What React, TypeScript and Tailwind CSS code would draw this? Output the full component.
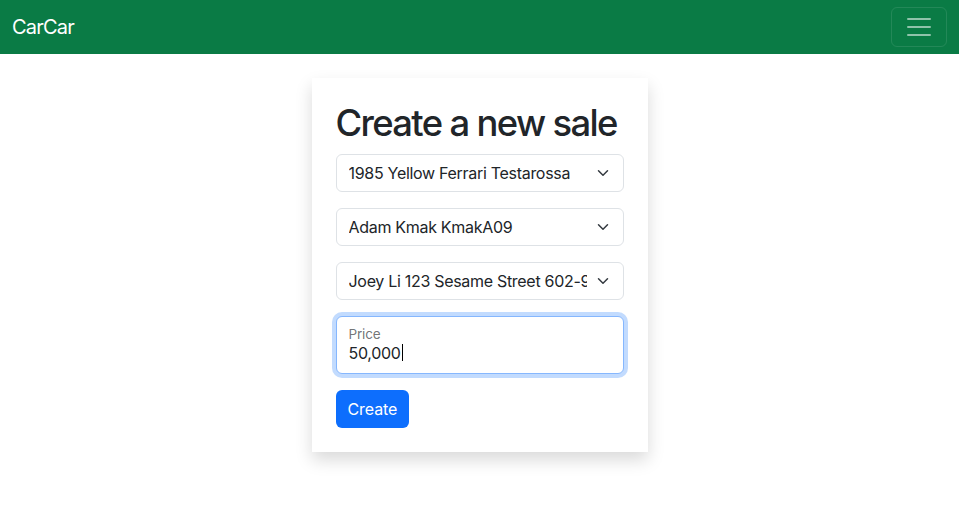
import React from 'react';

const font = { fontFamily: 'Inter, "Noto Sans", "Liberation Sans", sans-serif' };

function Chevron() {
  return (
    <svg
      className="pointer-events-none absolute right-[12px] top-1/2 -translate-y-1/2"
      width="16"
      height="12"
      viewBox="0 0 16 16"
      fill="none"
    >
      <path d="m2 5 6 6 6-6" stroke="#343a40" strokeWidth="2" strokeLinecap="round" strokeLinejoin="round" />
    </svg>
  );
}

function FakeSelect({ value }: { value: string }) {
  return (
    <div className="relative mb-4 h-[38px] rounded-[6px] border border-[#dee2e6] bg-white py-[6px] pl-[12px] pr-[36px]">
      <div className="overflow-hidden whitespace-nowrap text-[16px] leading-6 tracking-[-0.3px] text-[#212529]">
        {value}
      </div>
      <Chevron />
    </div>
  );
}

export default function App() {
  return (
    <div className="min-h-screen bg-white" style={font}>
      {/* navbar */}
      <nav className="flex h-[54px] items-center justify-between bg-[#0a7b45] px-3">
        <a className="text-[20px] leading-[30px] tracking-[-0.8px] text-white">CarCar</a>
        <button className="flex h-[40px] w-[56px] items-center justify-center rounded-[6px] border border-white/10">
          <svg width="30" height="30" viewBox="0 0 30 30" fill="none">
            <path d="M4 7h22M4 15h22M4 23h22" stroke="rgba(255,255,255,0.55)" strokeWidth="2" strokeLinecap="round" />
          </svg>
        </button>
      </nav>

      {/* form card */}
      <div className="mx-auto mt-6 w-[336px] bg-white p-6 shadow-[0_8px_16px_rgba(0,0,0,0.15)]">
        <h1 className="mb-2 whitespace-nowrap text-[36.4px] font-medium leading-[1.2] tracking-[-1.65px] text-[#212529]">
          Create a new sale
        </h1>
        <form>
          <FakeSelect value="1985 Yellow Ferrari Testarossa" />
          <FakeSelect value="Adam Kmak KmakA09" />
          <FakeSelect value="Joey Li 123 Sesame Street 602-987-6543" />

          <div className="relative mb-4 h-[58px] rounded-[6px] border border-[#86b7fe] bg-white shadow-[0_0_0_4px_rgba(13,110,253,0.25)]">
            <label className="absolute left-[12px] top-[7px] text-[13.6px] leading-[20.4px] tracking-[-0.2px] text-[#212529]/65">
              Price
            </label>
            <div className="absolute left-[12px] top-[24px] flex items-center text-[16px] leading-6 tracking-[-0.3px] text-[#212529]">
              50,000
              <span className="ml-[1px] inline-block h-[17px] w-px bg-black" />
            </div>
          </div>

          <button
            type="button"
            className="h-[38px] rounded-[6px] bg-[#0d6efd] px-3 text-[16px] leading-6 tracking-[-0.1px] text-white"
          >
            Create
          </button>
        </form>
      </div>
    </div>
  );
}
